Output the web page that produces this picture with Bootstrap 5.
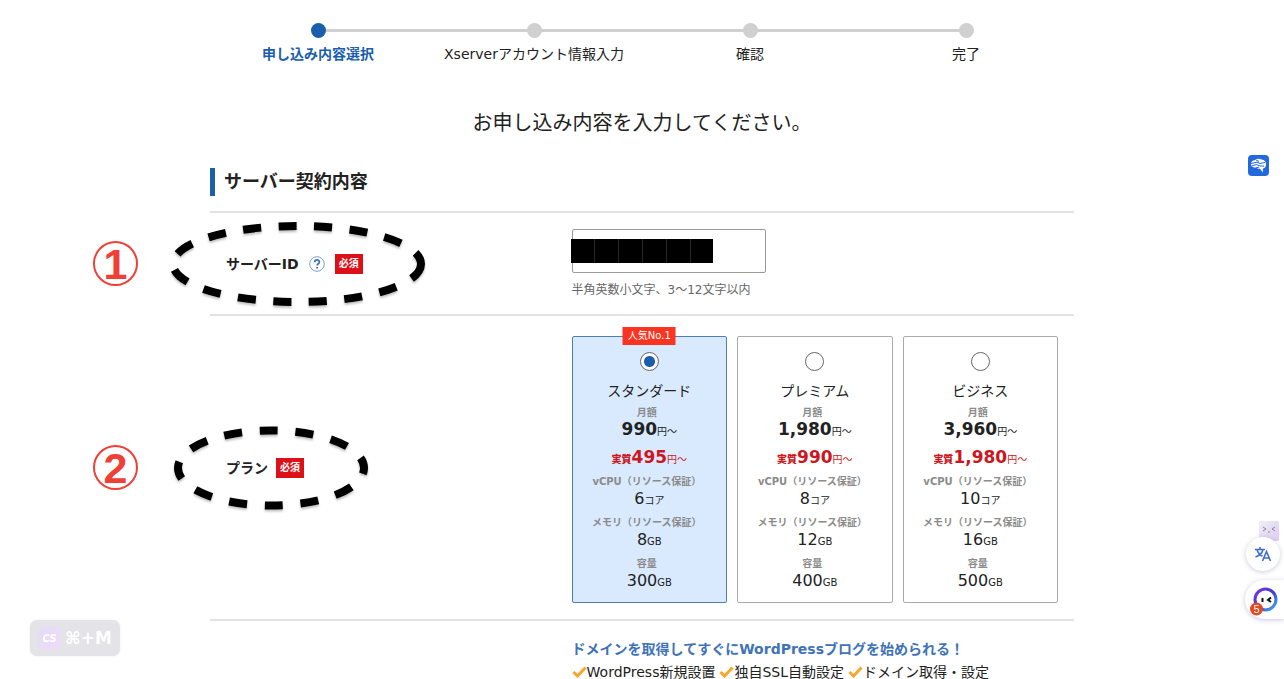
<!DOCTYPE html>
<html lang="ja">
<head>
<meta charset="utf-8">
<meta name="viewport" content="width=device-width, initial-scale=1">
<title>お申し込み内容の入力</title>
<link href="https://cdn.jsdelivr.net/npm/bootstrap@5.3.0/dist/css/bootstrap.min.css" rel="stylesheet">
<style>
:root { --brand: #1b5eab; --line: #e2e2e2; }
body { font-family: "DejaVu Sans", "Noto Sans CJK JP", sans-serif; font-size: 14px; line-height: 16px; color: #222; background: #fff; overflow-x: hidden; }
.page { max-width: 864px; }

/* progress steps */
.steps { padding-top: 23px; }
.step { position: relative; flex: 1 1 0; }
.step + .step::before { content: ""; position: absolute; top: 6px; left: -50%; width: 100%; height: 3px; background: #d0d0d0; }
.dot { position: relative; z-index: 1; width: 15px; height: 15px; background: #d0d0d0; }
.step.now { color: var(--brand); font-weight: 700; }
.step.now .dot { background: var(--brand); }

.lead-title { font-size: 20px; line-height: 28px; margin: 47px 0 31px; }
.sec-title { font-size: 18px; line-height: 28px; border-left: 5px solid var(--brand); padding-left: 9px; margin-bottom: 15px; }

/* form rows */
.form-line { position: relative; border-top: 2px solid var(--line); }
.side { flex: 0 0 40%; padding-left: 16px; }
.main { flex: 1 1 0; min-width: 0; padding: 16px; }
.need { background: #dc1018; color: #fff; font-size: 10px; font-weight: 700; line-height: 20px; padding: 0 4px; }
.help-btn { width: 16px; height: 16px; line-height: 0; margin: 0 10px; }
.id-box { width: 194px; max-width: 100%; }
.id-input { height: 44px; border: 1px solid #999; border-radius: 2px; font-size: 14px; }
.masked { top: 10px; left: -1px; width: 142px; height: 24px; background: repeating-linear-gradient(90deg, #000 0 23px, #262626 23px 24px); }
.hint { font-size: 12px; color: #666; margin-top: 9px; }

/* plan cards */
.plans { gap: 10px; }
.plan { position: relative; flex: 1 1 0; border: 1px solid #aaa; border-radius: 2px; padding: 15px 0 13px; cursor: pointer; }
.plan.on { background: #d9eaff; border-color: #4c7db5; }
.plan input { appearance: none; width: 19px; height: 19px; margin: 0 0 10px; border: 1px solid #666; border-radius: 50%; background: #fff; }
.plan input:checked { background: radial-gradient(circle, var(--brand) 0 5px, #fff 6px); }
.popular { top: -10px; left: 50%; transform: translateX(-50%); background: #fa3420; color: #fff; font-size: 10px; line-height: 18px; width: 53px; }
.plan-name { line-height: 20px; margin-bottom: 3px; }
.cap { font-size: 10px; line-height: 17px; font-weight: 700; color: #8b8b8b; white-space: nowrap; padding-right: 5px; }
.num { font-size: 16px; line-height: 17px; height: 17px; }
.num small { font-size: 10px; line-height: 10px; font-weight: 400; }
.price { font-size: 17px; font-weight: 700; }
.deal { color: #cc1620; margin-top: 11px; }
.deal b { font-size: 10px; line-height: 10px; }
.spec { margin-top: 7px; }

.wp-title { color: #3f73b7; font-weight: 700; margin-bottom: 7px; }
.tick { width: 15px; height: 12px; }

/* tutorial marks drawn over the form */
.mark-no { left: -117px; top: 50%; width: 45px; height: 45px; margin-top: -23px; border: 2px solid #ee4036; border-radius: 50%; color: #ee4036; font: 700 43px/43px "Liberation Sans", sans-serif; }
.mark-ring { top: 50%; transform: translateY(-50%); pointer-events: none; overflow: visible; filter: drop-shadow(0 2px 1px rgba(0,0,0,.25)); }
.ring-a { left: -42px; }
.ring-b { left: -37px; }

/* floating helpers */
.float-item { position: fixed; z-index: 5; }
.f-brain { right: 15px; top: 155px; }
.f-face { right: 5px; top: 521px; }
.f-trans { right: 4px; top: 537px; width: 34px; height: 34px; background: #fff; box-shadow: 0 1px 5px rgba(60,60,90,.25); }
.f-chat { right: 0; top: 580px; width: 39px; height: 39px; background: #fff; border-radius: 20px 0 0 20px; box-shadow: 0 1px 5px rgba(90,60,160,.3); }
.f-keys { left: 30px; bottom: 23px; width: 90px; height: 36px; background: #e4e4e8; border-radius: 7px; color: #fff; font-size: 17px; font-weight: 700; box-shadow: 0 0 3px #eee; }
.keys-logo { width: 23px; height: 23px; border-radius: 7px; background: linear-gradient(135deg, #e2dcf8, #f0dcf4); font: italic 700 10px/23px "DejaVu Sans", sans-serif; }
</style>
</head>
<body>
<main class="page mx-auto">
  <ol class="steps d-flex list-unstyled text-center mb-0">
    <li class="step now"><span class="dot d-block rounded-circle mx-auto mb-2"></span>申し込み内容選択</li>
    <li class="step"><span class="dot d-block rounded-circle mx-auto mb-2"></span>Xserverアカウント情報入力</li>
    <li class="step"><span class="dot d-block rounded-circle mx-auto mb-2"></span>確認</li>
    <li class="step"><span class="dot d-block rounded-circle mx-auto mb-2"></span>完了</li>
  </ol>
  <h1 class="lead-title fw-normal text-center">お申し込み内容を入力してください。</h1>
  <h2 class="sec-title fw-bold">サーバー契約内容</h2>

  <form>
    <div class="form-line d-flex align-items-center">
      <div class="side d-flex align-items-center fw-bold">
        <label for="server-id">サーバーID</label>
        <button type="button" class="help-btn btn p-0 border-0" aria-label="ヘルプ">
          <svg width="16" height="16" viewBox="0 0 16 16"><circle cx="8" cy="8" r="7.3" fill="#fff" stroke="#7d9fc8"/><path d="M5.700 6.200c0-3 4.700-3 4.700-.2 0 1.700-2.300 1.800-2.300 3.500M8.100 10.900v1.700" fill="none" stroke="#3f73b7" stroke-width="1.800"/></svg>
        </button>
        <span class="need">必須</span>
      </div>
      <div class="main">
        <div class="id-box position-relative">
          <input id="server-id" class="id-input form-control" type="text">
          <span class="masked position-absolute"></span>
        </div>
        <p class="hint mb-0">半角英数小文字、3〜12文字以内</p>
      </div>
      <span class="mark-no position-absolute text-center">1</span>
      <svg class="mark-ring ring-a position-absolute" width="258" height="86" viewBox="0 0 258 86"><ellipse cx="129" cy="43" rx="124" ry="38" fill="none" stroke="#000" stroke-width="8" stroke-dasharray="18 17.5"/></svg>
    </div>

    <div class="form-line d-flex align-items-center">
      <div class="side d-flex align-items-center fw-bold"><span id="plan-label">プラン</span><span class="need ms-2">必須</span></div>
      <div class="main">
        <div class="plans d-flex text-center pt-1" role="radiogroup" aria-labelledby="plan-label">
          <label class="plan on">
            <span class="popular position-absolute">人気No.1</span>
            <input type="radio" name="plan" class="d-block mx-auto" checked>
            <span class="plan-name d-block">スタンダード</span>
            <span class="cap d-block">月額</span>
            <span class="num price d-block">990<small>円〜</small></span>
            <span class="num price deal d-block"><b>実質</b>495<small>円〜</small></span>
            <span class="cap spec d-block">vCPU（リソース保証）</span><span class="num d-block">6<small>コア</small></span>
            <span class="cap spec d-block">メモリ（リソース保証）</span><span class="num d-block">8<small>GB</small></span>
            <span class="cap spec d-block">容量</span><span class="num d-block">300<small>GB</small></span>
          </label>
          <label class="plan">
            <input type="radio" name="plan" class="d-block mx-auto">
            <span class="plan-name d-block">プレミアム</span>
            <span class="cap d-block">月額</span>
            <span class="num price d-block">1,980<small>円〜</small></span>
            <span class="num price deal d-block"><b>実質</b>990<small>円〜</small></span>
            <span class="cap spec d-block">vCPU（リソース保証）</span><span class="num d-block">8<small>コア</small></span>
            <span class="cap spec d-block">メモリ（リソース保証）</span><span class="num d-block">12<small>GB</small></span>
            <span class="cap spec d-block">容量</span><span class="num d-block">400<small>GB</small></span>
          </label>
          <label class="plan">
            <input type="radio" name="plan" class="d-block mx-auto">
            <span class="plan-name d-block">ビジネス</span>
            <span class="cap d-block">月額</span>
            <span class="num price d-block">3,960<small>円〜</small></span>
            <span class="num price deal d-block"><b>実質</b>1,980<small>円〜</small></span>
            <span class="cap spec d-block">vCPU（リソース保証）</span><span class="num d-block">10<small>コア</small></span>
            <span class="cap spec d-block">メモリ（リソース保証）</span><span class="num d-block">16<small>GB</small></span>
            <span class="cap spec d-block">容量</span><span class="num d-block">500<small>GB</small></span>
          </label>
        </div>
      </div>
      <span class="mark-no position-absolute text-center">2</span>
      <svg class="mark-ring ring-b position-absolute" width="196" height="86" viewBox="0 0 196 86"><ellipse cx="98" cy="43" rx="93" ry="37.5" fill="none" stroke="#000" stroke-width="8" stroke-dasharray="18 17.75" stroke-dashoffset="12"/></svg>
    </div>

    <div class="form-line d-flex">
      <div class="side"></div>
      <div class="main pb-0">
        <p class="wp-title pt-1">ドメインを取得してすぐにWordPressブログを始められる！</p>
        <ul class="list-unstyled d-flex mb-0 text-nowrap">
          <li class="d-flex align-items-center me-1"><svg class="tick" viewBox="0 0 15 12"><path d="M1.500 6l4 4 8-8.500" fill="none" stroke="#fba62c" stroke-width="3"/></svg>WordPress新規設置</li>
          <li class="d-flex align-items-center me-1"><svg class="tick" viewBox="0 0 15 12"><path d="M1.500 6l4 4 8-8.500" fill="none" stroke="#fba62c" stroke-width="3"/></svg>独自SSL自動設定</li>
          <li class="d-flex align-items-center"><svg class="tick" viewBox="0 0 15 12"><path d="M1.500 6l4 4 8-8.500" fill="none" stroke="#fba62c" stroke-width="3"/></svg>ドメイン取得・設定</li>
        </ul>
      </div>
    </div>
  </form>
</main>

<button type="button" class="float-item f-brain btn p-0 border-0 lh-1" aria-label="AI">
  <svg class="d-block" width="21" height="21" viewBox="0 0 21 21"><rect width="21" height="21" rx="4" fill="#2468dd"/><path d="M3 9.500c-.3-3 2.200-4.200 4-4.500 2.500-2 5-1.200 6.500-.5 3 .3 4.800 2.500 4.500 5.500-.2 2.500-1.800 3.300-3 3.500l-.2 4-2.800-3.700c-2 .2-3-.4-3.500-1.300-3 0-5.300-.5-5.500-3z" fill="#fff"/><path d="M3 8.500l6-1.300 3 1.300 5-1M3.500 11l5-1.500 3.500 1.500h4M8 13l3-1M8 5l3 1.500" stroke="#2468dd" fill="none"/></svg>
</button>
<svg class="float-item f-face" width="20" height="20" viewBox="0 0 20 20"><defs><linearGradient id="fg" x2="1" y2="1"><stop stop-color="#f0eef5"/><stop offset="1" stop-color="#dccbf3"/></linearGradient></defs><rect width="20" height="20" rx="2" fill="url(#fg)"/><path d="M4 6l3 2-3 2M16 6l-3 2 3 2M9 11h2" stroke="#8e8799" fill="none"/></svg>
<button type="button" class="float-item f-trans btn p-0 border-0 rounded-circle d-flex align-items-center justify-content-center" aria-label="翻訳">
  <svg width="18" height="18" viewBox="0 0 18 18" fill="none" stroke="#3d6fce" stroke-width="1.600"><path d="M1 4.500h10M6 2v2.500M3 4.500c.8 3 3 5.500 5.500 6.800M9 4.500c-.8 3.300-3.500 6.300-7.500 7.500M8.500 16l4-9.500 4 9.500M10 13h5"/></svg>
</button>
<button type="button" class="float-item f-chat btn p-0 border-0" aria-label="チャット">
  <svg class="d-block" width="39" height="39" viewBox="0 0 39 39"><defs><linearGradient id="cg" x2="1" y2="1"><stop stop-color="#7a36e0"/><stop offset=".5" stop-color="#4338d8"/><stop offset="1" stop-color="#39b6ee"/></linearGradient></defs><circle cx="20.500" cy="19.500" r="10.500" fill="#fff" stroke="url(#cg)" stroke-width="3"/><path d="M17.500 18v4M26 17.500l-3 2.500 3 2" stroke="#111" stroke-width="2" fill="none"/><circle cx="11.500" cy="29" r="6.500" fill="#e34a22"/><text x="11.500" y="33" text-anchor="middle" font-family="Liberation Sans, sans-serif" font-size="11" fill="#fff">5</text></svg>
</button>
<div class="float-item f-keys d-flex align-items-center justify-content-center gap-1"><span class="keys-logo text-center">CS</span><span>⌘+M</span></div>
<script src="https://cdn.jsdelivr.net/npm/bootstrap@5.3.0/dist/js/bootstrap.bundle.min.js"></script>
</body>
</html>
